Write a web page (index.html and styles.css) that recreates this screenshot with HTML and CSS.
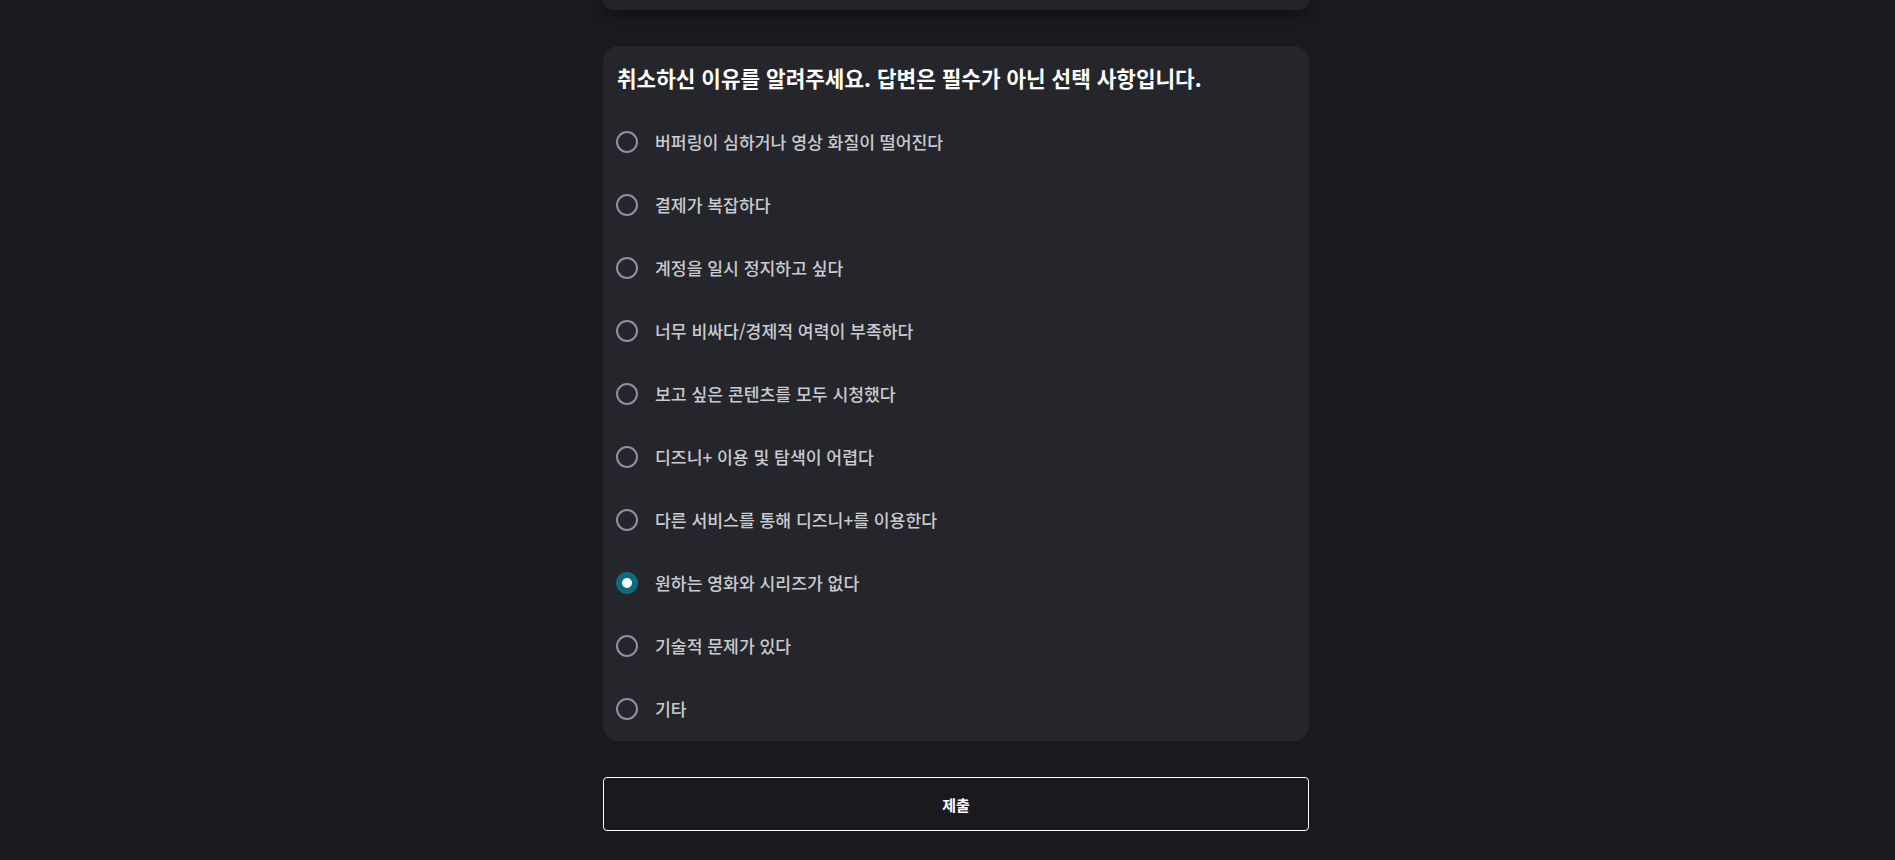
FILE: index.html
```html
<!DOCTYPE html>
<html lang="ko">
<head>
<meta charset="utf-8">
<title>취소 사유</title>
<link rel="stylesheet" href="styles.css">
</head>
<body>
<div class="page">
  <div class="card card-top"></div>
  <form class="card survey">
    <h2 class="survey-title">취소하신 이유를 알려주세요. 답변은 필수가 아닌 선택 사항입니다.</h2>
    <label class="option"><span class="radio"></span><span class="option-text">버퍼링이 심하거나 영상 화질이 떨어진다</span></label>
    <label class="option"><span class="radio"></span><span class="option-text">결제가 복잡하다</span></label>
    <label class="option"><span class="radio"></span><span class="option-text">계정을 일시 정지하고 싶다</span></label>
    <label class="option"><span class="radio"></span><span class="option-text">너무 비싸다/경제적 여력이 부족하다</span></label>
    <label class="option"><span class="radio"></span><span class="option-text">보고 싶은 콘텐츠를 모두 시청했다</span></label>
    <label class="option"><span class="radio"></span><span class="option-text">디즈니+ 이용 및 탐색이 어렵다</span></label>
    <label class="option"><span class="radio"></span><span class="option-text">다른 서비스를 통해 디즈니+를 이용한다</span></label>
    <label class="option"><span class="radio radio-checked"></span><span class="option-text">원하는 영화와 시리즈가 없다</span></label>
    <label class="option"><span class="radio"></span><span class="option-text">기술적 문제가 있다</span></label>
    <label class="option"><span class="radio"></span><span class="option-text">기타</span></label>
  </form>
  <button class="submit" type="button">제출</button>
</div>
</body>
</html>
```

FILE: styles.css
```css
html, body {
  margin: 0;
  padding: 0;
  background: #1a1a1e;
  font-family: "Noto Sans CJK KR", "Noto Sans", sans-serif;
}

.page {
  padding-left: 17px;
  display: flex;
  flex-direction: column;
  align-items: center;
  gap: 36px;
  height: 860px;
  overflow: hidden;
  box-sizing: border-box;
}

.card {
  width: 706px;
  box-sizing: border-box;
  background: #25262b;
  border-radius: 16px;
}

.card-top {
  height: 10px;
  border-radius: 0 0 16px 16px;
  background: #222328;
  box-shadow: 0 4px 12px rgba(0, 0, 0, 0.45);
}

.survey {
  margin: 0;
  padding: 16px 14px 0 13px;
  height: 695px;
}

.survey-title {
  margin: 0 0 16px 1px;
  font-size: 21.3px;
  line-height: 32px;
  font-weight: 700;
  color: #ffffff;
}

.option {
  display: flex;
  align-items: center;
  gap: 17px;
  height: 63px;
}

.radio {
  width: 22px;
  height: 22px;
  box-sizing: border-box;
  border: 2px solid #8f929a;
  border-radius: 50%;
  flex: none;
}

.radio-checked {
  border: 6px solid #0c6b7d;
  background: #ffffff;
}

.option-text {
  font-size: 17.2px;
  color: #c9cbd0;
  line-height: 24px;
  font-weight: 500;
}

.submit {
  width: 706px;
  height: 54px;
  background: #1a1a1e;
  border: 1px solid #ffffff;
  border-radius: 4px;
  color: #ffffff;
  font-family: "Noto Sans CJK KR", "Noto Sans", sans-serif;
  font-size: 15px;
  font-weight: 700;
  flex: none;
}
```
